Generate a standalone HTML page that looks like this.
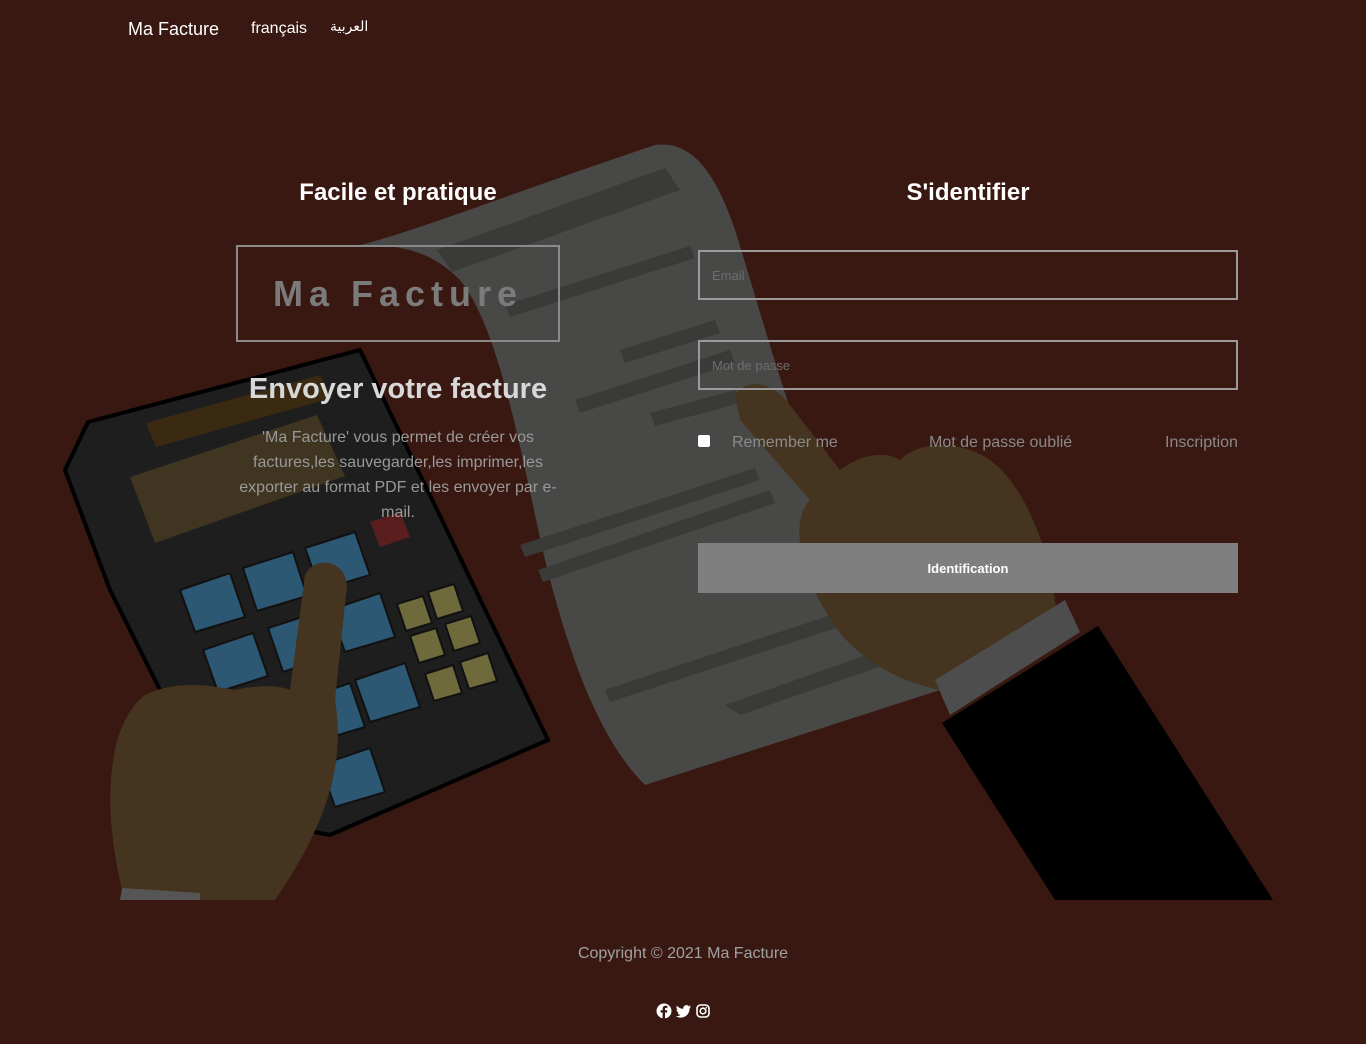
<!DOCTYPE html>
<html><head><meta charset="utf-8"><style>
*{margin:0;padding:0;box-sizing:border-box}
body{width:1366px;height:1044px;background:#391812;font-family:"Liberation Sans","Noto Sans CJK SC",sans-serif;position:relative;overflow:hidden;color:#fff}
svg.bg{position:absolute;left:0;top:0}
.a{position:absolute}
.nav{top:19px;font-size:18px}
</style></head><body>
<svg class="bg" width="1366" height="1044" viewBox="0 0 1366 1044">
<path d="M360 245 C420 230 520 190 655 145 C690 140 715 170 735 230 C760 310 790 420 830 520 C860 600 900 660 940 690 L645 785 C600 740 570 660 545 560 C520 450 500 330 460 280 C430 250 400 245 360 245Z" fill="#484846"/>
<g fill="#3a3a38">
<polygon points="437,250 665,168 680,190 452,272"/>
<polygon points="505,305 690,246 695,258 510,317"/>
<polygon points="620,350 715,320 720,333 625,363"/>
<polygon points="575,400 730,350 735,363 580,413"/>
<polygon points="650,413 735,390 740,403 655,426"/>
<polygon points="520,545 755,468 760,480 525,557"/>
<polygon points="538,570 770,490 775,503 543,582"/>
<polygon points="605,690 840,612 845,625 610,702"/>
<polygon points="725,705 880,650 885,665 740,715"/>
</g>
<path d="M88 422 L360 350 L548 740 L330 835 L250 820 L160 690 L110 590 L65 470 Z" fill="#1e1e1e" stroke="#000" stroke-width="4"/>
<polygon points="146,423 320,375 332,398 156,447" fill="#3a2a12"/>
<polygon points="130,477 317,415 345,476 155,543" fill="#3f3520"/>
<g fill="#2d5873" stroke="#111" stroke-width="2">
<polygon points="180,590 230,573 245,617 195,632"/>
<polygon points="243,568 293,552 307,596 257,611"/>
<polygon points="305,548 355,532 370,575 320,590"/>
<polygon points="203,650 253,633 268,676 218,692"/>
<polygon points="268,628 318,612 333,655 283,672"/>
<polygon points="330,610 380,593 395,637 345,652"/>
<polygon points="355,680 405,663 420,707 370,722"/>
<polygon points="300,700 350,683 365,727 315,742"/>
<polygon points="320,765 370,748 385,792 335,807"/>
</g>
<polygon points="370,522 400,512 410,537 380,547" fill="#5a1e1e"/>
<g fill="#6f6a3c" stroke="#111" stroke-width="2">
<polygon points="397,604 423,596 432,623 406,631"/>
<polygon points="428,592 454,584 463,611 437,619"/>
<polygon points="410,636 436,628 445,655 419,663"/>
<polygon points="445,624 471,616 480,643 454,651"/>
<polygon points="425,674 453,665 462,693 434,701"/>
<polygon points="460,662 488,653 497,681 469,689"/>
</g>
<path d="M305 575 C315 555 345 560 347 585 L335 700 C345 760 330 820 275 900 L125 900 C105 830 100 730 145 695 C175 680 210 685 235 690 C255 685 280 685 290 690 Z" fill="#45341f"/>
<polygon points="122,888 200,893 200,900 120,900" fill="#555"/>
<path d="M735 395 C750 375 775 385 790 405 L840 470 C860 455 885 450 900 460 C920 440 960 440 990 460 C1030 490 1050 560 1055 600 L1060 640 L940 690 C890 680 845 650 825 610 C800 570 790 520 810 500 L740 420 Z" fill="#45341f"/>
<polygon points="935,680 1065,600 1080,632 950,715" fill="#4d4d4d"/>
<polygon points="942,723 1098,626 1273,900 1055,900" fill="#000"/>
</svg>

<div class="a nav" style="left:128px">Ma Facture</div>
<div class="a" style="left:251px;top:20px;font-size:16px">français</div>
<div class="a" style="left:330px;top:18px;font-size:14px">العربية</div>

<div class="a" style="left:236px;top:179px;width:324px;text-align:center;font-size:24px;font-weight:bold">Facile et pratique</div>
<div class="a" style="left:236px;top:245px;width:324px;height:97px;border:2px solid #8a8a8a;text-align:center;line-height:93px;font-size:36px;font-weight:bold;letter-spacing:6px;color:#7b7b7b">Ma Facture</div>
<div class="a" style="left:236px;top:373px;width:324px;text-align:center;font-size:29px;font-weight:bold;color:#d8d8d8">Envoyer votre facture</div>
<div class="a" style="left:236px;top:425px;width:324px;text-align:center;font-size:16px;line-height:25px;color:#999">'Ma Facture' vous permet de créer vos factures,les sauvegarder,les imprimer,les exporter au format PDF et les envoyer par e-mail.</div>

<div class="a" style="left:698px;top:179px;width:540px;text-align:center;font-size:24px;font-weight:bold">S'identifier</div>
<div class="a" style="left:698px;top:250px;width:540px;height:50px;border:2px solid #9a9a9a;font-size:13px;color:#6d6d6d;padding:16px 12px">Email</div>
<div class="a" style="left:698px;top:340px;width:540px;height:50px;border:2px solid #9a9a9a;font-size:13px;color:#6d6d6d;padding:16px 12px">Mot de passe</div>
<div class="a" style="left:698px;top:435px;width:12px;height:12px;background:#fff;border-radius:2px"></div>
<div class="a" style="left:732px;top:434px;font-size:16px;color:#8a8a8a">Remember me</div>
<div class="a" style="left:929px;top:434px;font-size:16px;color:#8a8a8a">Mot de passe oublié</div>
<div class="a" style="left:1165px;top:434px;font-size:16px;color:#8a8a8a">Inscription</div>
<div class="a" style="left:698px;top:543px;width:540px;height:50px;background:#7f7f7f;text-align:center;line-height:51px;font-size:13px;font-weight:bold">Identification</div>

<div class="a" style="left:0;top:945px;width:1366px;text-align:center;font-size:16px;color:#a0a0a0">Copyright © 2021 Ma Facture</div>
<svg class="a" style="left:656px;top:1003px" width="56" height="16" viewBox="0 0 56 16">
<circle cx="8" cy="8" r="7.5" fill="#fff"/><path d="M9 16V9.5h2l.3-2.3H9V6c0-.7.2-1.1 1.2-1.1h1.2V2.8c-.2 0-1-.1-1.8-.1-1.8 0-3 1.1-3 3v1.5h-2v2.3h2V16z" fill="#391812"/>
<path d="M35 3.5c-.6.3-1.2.4-1.8.5.7-.4 1.100-1 1.4-1.7-.6.4-1.3.6-2 .8-1.2-1.3-3.2-1.3-4.4-.1-.8.8-1.1 1.9-.9 2.9-2.5-.1-4.8-1.300-6.4-3.2-.8 1.4-.4 3.2 1 4.2-.5 0-1-.2-1.4-.4 0 1.5 1 2.8 2.5 3.1-.5.1-.9.2-1.4.1.4 1.3 1.6 2.1 2.9 2.2-1.3 1-3 1.5-4.600 1.3 1.4.9 3.1 1.4 4.8 1.4 5.7 0 8.9-4.8 8.9-9v-.4c.6-.5 1.1-1 1.4-1.7z" fill="#fff"/>
<rect x="41" y="2" width="12" height="12" rx="3.5" fill="none" stroke="#fff" stroke-width="1.6"/><circle cx="47" cy="8" r="2.8" fill="none" stroke="#fff" stroke-width="1.6"/><circle cx="50.3" cy="4.7" r=".8" fill="#fff"/>
</svg>
</body></html>
